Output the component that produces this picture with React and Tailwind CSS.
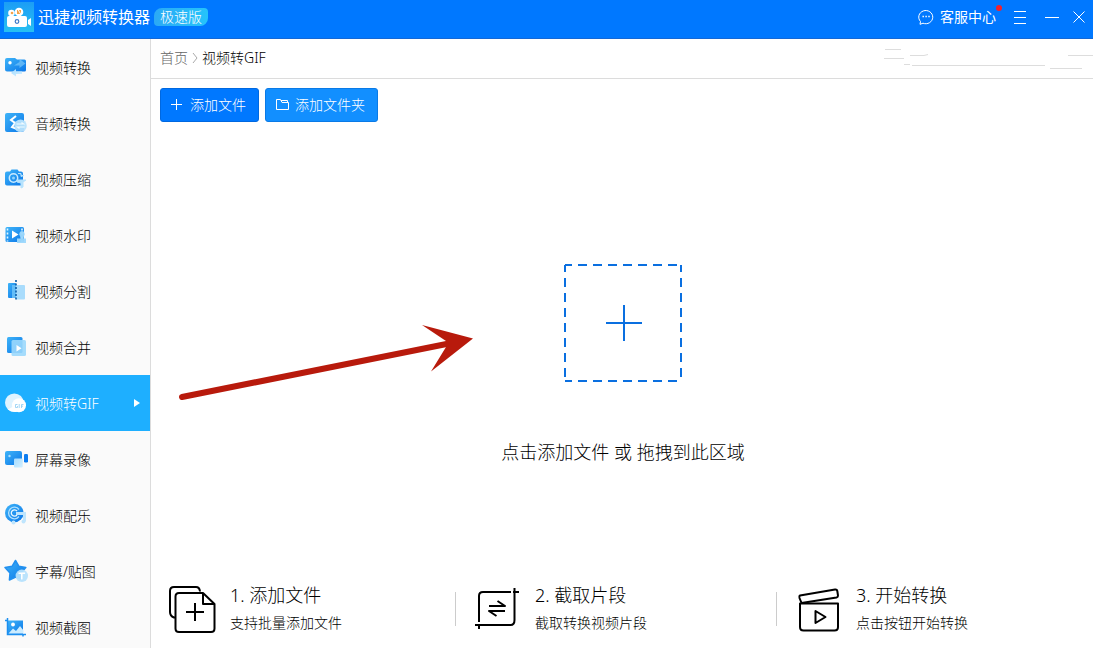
import React, { useState } from 'react';

// Shared gradients for the sidebar icons
const IconDefs = () => (
  <svg className="absolute w-0 h-0" aria-hidden="true">
    <defs>
      <linearGradient id="blue" x1="0" y1="0" x2="1" y2="1">
        <stop offset="0" stopColor="#3fb4f8" />
        <stop offset="1" stopColor="#0a76e8" />
      </linearGradient>
      <linearGradient id="light" x1="0" y1="0" x2="1" y2="1">
        <stop offset="0" stopColor="#a5dcff" />
        <stop offset="1" stopColor="#d3efff" />
      </linearGradient>
      <linearGradient id="logo" x1="0" y1="0" x2="0" y2="1">
        <stop offset="0" stopColor="#1c9df5" />
        <stop offset="1" stopColor="#27c0f2" />
      </linearGradient>
    </defs>
  </svg>
);

const icons = {
  convert: (
    <>
      <path d="M3 3h8l2 1.500h7.500q1.500 0 1.500 1.500v9q0 1.500-1.500 1.500H3q-2 0-2-2V5q0-2 2-2z" fill="url(#blue)" />
      <circle cx="6" cy="7.700" r="1.700" fill="#fff" />
      <path d="M10 10.500h5.500V13l6-4.500-6-4.500v3" fill="#7fcbfb" opacity=".65" />
      <path d="M18 16.500H12V14l-5 4 5 3.500v-2.500h6z" fill="url(#light)" />
    </>
  ),
  audio: (
    <>
      <rect x="1" y="2" width="19" height="19" rx="2" fill="url(#blue)" />
      <path d="M12 5l-5 4 4 3-3 4 5 2" fill="none" stroke="#fff" strokeWidth="2" />
      <circle cx="16.500" cy="14.800" r="6.300" fill="#b9e3fc" opacity=".95" />
      <path d="M12.500 13h7l-2-1.500M20.500 16h-7l2 1.500" fill="none" stroke="#f2fbff" strokeWidth="1.200" />
    </>
  ),
  compress: (
    <>
      <path d="M3 4.500h3l1.500-2h6l1.500 2h2q2 0 2 2v10q0 2-2 2H3q-2 0-2-2v-10q0-2 2-2z" fill="url(#blue)" />
      <circle cx="9.500" cy="11" r="4.200" fill="none" stroke="#c9eaff" strokeWidth="1.500" />
      <circle cx="9.500" cy="11" r="1.500" fill="#8fd3fb" />
      <path d="M14 6.500h3v3l3-1M12.500 13H22l-3 2v5l-2 1v-5l-4-1z" fill="#b5e2fd" stroke="#b5e2fd" />
    </>
  ),
  watermark: (
    <>
      <rect x="1.500" y="4" width="18.500" height="15" rx="1.500" fill="url(#blue)" />
      <path d="M3.500 5.500v13M18 5.500v13" stroke="#e2f5ff" strokeWidth="1.600" strokeDasharray="2 2" />
      <path d="M8 7.500l6.500 4-6.500 4z" fill="#fff" />
      <path d="M18 8a3 3 0 0 1 2 5l-.5 2.500H22V20h-9v-4.500h3.500L16 13a3 3 0 0 1 2-5z" fill="#9dd8fc" opacity=".95" />
    </>
  ),
  split: (
    <>
      <rect x="4" y="4" width="8" height="15" rx="1" fill="url(#blue)" />
      <rect x="12" y="6" width="9" height="14.500" rx="1" fill="#a9dcfc" />
      <rect x="8" y="6" width="4" height="13" fill="#63bdf7" />
      <path d="M12 1v20" stroke="#0b5da8" strokeWidth="1.600" strokeDasharray="2 1.500" />
    </>
  ),
  merge: (
    <>
      <rect x="3" y="2" width="15.500" height="16" rx="1.500" fill="url(#blue)" />
      <rect x="7.500" y="5" width="14.500" height="16" rx="1.500" fill="#9bd8fc" opacity=".9" />
      <path d="M12.500 10l5 3.200-5 3.200z" fill="#fff" />
    </>
  ),
  gif: (
    <>
      <circle cx="10.300" cy="11.700" r="9.300" fill="#dff3ff" />
      <path d="M4 18.500q3 3 9 2.500l-3-6z" fill="#fff" />
      <circle cx="15" cy="14.200" r="7" fill="#fff" />
      <path d="M13.500 13.500h-2v3h2v-1.500M15.200 13v4M17.500 17v-3.500h2M17.500 15.200h1.500" fill="none" stroke="#8ccbf2" strokeWidth=".8" />
    </>
  ),
  record: (
    <>
      <rect x="1" y="4" width="17" height="14" rx="2" fill="url(#blue)" />
      <circle cx="5.500" cy="9" r="1.200" fill="#a9e0ff" />
      <rect x="10" y="11.500" width="8.700" height="9" rx="1" fill="url(#light)" />
      <rect x="20" y="7" width="4" height="8.500" rx="1.200" fill="#0c7cf0" />
    </>
  ),
  music: (
    <>
      <circle cx="10.300" cy="10" r="9.300" fill="url(#blue)" />
      <path d="M15 6.500a5.800 5.800 0 1 0 0 7" fill="none" stroke="#aee0ff" strokeWidth="1.300" />
      <path d="M13 8a3.200 3.200 0 1 0 0 4" fill="none" stroke="#e8f7ff" strokeWidth="1.300" />
      <path d="M12 10.500h8.500v8" fill="none" stroke="#bfe5fd" strokeWidth="3" />
      <circle cx="9.500" cy="19.500" r="2" fill="#bfe5fd" />
      <circle cx="19.500" cy="18.500" r="2" fill="#bfe5fd" />
    </>
  ),
  sticker: (
    <>
      <path d="M11.500 1.500l3.300 5.700 7 1.300-4.600 5.300.8 6.800-6.300-2.600-6.300 3 .6-7L1 8.500l7.200-1.300z" fill="url(#blue)" stroke="#2290ef" strokeWidth="1.500" strokeLinejoin="round" />
      <circle cx="17.800" cy="16.800" r="6.200" fill="#b7e1fc" opacity=".95" />
      <path d="M14.500 14.200h6.600M17.800 14.200v6.300" stroke="#fff" strokeWidth="1.600" />
    </>
  ),
  capture: (
    <>
      <rect x="4" y="5.500" width="15" height="13.500" fill="url(#blue)" />
      <path d="M1 5.500h3M3.500 3v16.500H22M19 19v2.500" fill="none" stroke="#1c8ff0" strokeWidth="1.500" />
      <circle cx="9" cy="9.500" r="1.900" fill="#fff" />
      <path d="M4.500 18.500l4.500-5 3 2.500 4-5 3.500 4.500v3z" fill="#cbecff" />
    </>
  )
};

const menuItems = [
  { id: 'convert', label: '视频转换' },
  { id: 'audio', label: '音频转换' },
  { id: 'compress', label: '视频压缩' },
  { id: 'watermark', label: '视频水印' },
  { id: 'split', label: '视频分割' },
  { id: 'merge', label: '视频合并' },
  { id: 'gif', label: '视频转GIF' },
  { id: 'record', label: '屏幕录像' },
  { id: 'music', label: '视频配乐' },
  { id: 'sticker', label: '字幕/贴图' },
  { id: 'capture', label: '视频截图' }
];

const steps = [
  {
    title: '1. 添加文件',
    text: '支持批量添加文件',
    icon: (
      <>
        <path d="M7 32.500H6Q2 31 2 27V6q0-4 4-4h22q3.500 0 4 4.500" />
        <path d="M35 8H11q-3.500 0-3.500 3.500v32q0 3.500 3.500 3.500h32q3.500 0 3.500-3.500V19z" />
        <path d="M35 8v11h11M27 18v18M18 27h18" />
      </>
    )
  },
  {
    title: '2. 截取片段',
    text: '截取转换视频片段',
    icon: (
      <>
        <path d="M6 37V11q0-4 4-4h28M41.500 11v24q0 5-4 5H2M41.500 3v8M40 7h6M6 40v4" />
        <path d="M16 21h16l-7.500-5M32 26H16l7.500 5" />
      </>
    )
  },
  {
    title: '3. 开始转换',
    text: '点击按钮开始转换',
    icon: (
      <>
        <path d="M6 10.500L41 4.500q2-.3 2.300 1.500l.7 4.500q.2 1.500-1.500 2L7.500 18 5.500 13q-.5-2 .5-2.500z" />
        <path d="M6 18.500h38V42q0 3.500-3.500 3.500h-31Q6 45.500 6 42z" />
        <path d="M21.500 26v12l10-6z" />
      </>
    )
  }
];

const Header = () => (
  <header className="flex shrink-0 items-center justify-between h-[39px] bg-[#0078ff] border-b border-[#1468d6] text-white pl-1 pr-2 pb-1">
    <div className="flex items-center">
      <svg width="30" height="30" viewBox="0 0 30 30" aria-hidden="true">
        <rect width="30" height="30" fill="url(#logo)" />
        <circle cx="7.500" cy="11" r="3.300" fill="#fff" />
        <circle cx="15" cy="10" r="4.300" fill="#fff" />
        <circle cx="8" cy="11" r="1.300" fill="#f5a34a" />
        <path d="M13 8h4v4h-4z" fill="#f5a34a" />
        <path d="M14 7.500l3 5" stroke="#fff" />
        <rect x="3" y="14" width="20" height="11" rx="2" fill="#fff" />
        <path d="M24 18l3-2v8l-3-2z" fill="#fff" />
        <circle cx="13" cy="19.500" r="1.800" fill="none" stroke="#3c78c8" strokeWidth="1.200" />
      </svg>
      <h1 className="ml-1 text-base leading-6 font-normal">迅捷视频转换器</h1>
      <span className="ml-1 px-1.5 text-sm leading-[18px] rounded-tl-lg rounded-tr-sm rounded-br-lg rounded-bl-sm bg-linear-to-r from-[#2ba9f5] to-[#25c4fb]">极速版</span>
    </div>

    <div className="flex items-center">
      <button type="button" className="relative flex items-center gap-1.5 text-sm leading-5 font-normal">
        <svg width="16" height="16" viewBox="0 0 16 16" fill="none" stroke="currentColor" aria-hidden="true">
          <path d="M2.500 12.500A7 6.600 0 1 1 5 14.200L2 15.300z" />
          <path d="M4.500 7.500h1.400M7.400 7.500h1.400M10.300 7.500h1.400" strokeWidth="1.500" />
        </svg>
        客服中心
        <span className="absolute -top-0.5 -right-1.5 size-1.5 rounded-full bg-[#f5202c]" />
      </button>
      <button type="button" aria-label="菜单" className="ml-[17px]">
        <svg width="14" height="16" viewBox="0 0 14 16" stroke="currentColor" aria-hidden="true">
          <path d="M1 2.500h12M1 8.500h12M1 14.500h12" />
        </svg>
      </button>
      <button type="button" aria-label="最小化" className="ml-[17px]">
        <svg width="16" height="16" viewBox="0 0 16 16" stroke="currentColor" aria-hidden="true">
          <path d="M1 8.500h14" />
        </svg>
      </button>
      <button type="button" aria-label="关闭" className="ml-[13px]">
        <svg width="12" height="12" viewBox="0 0 12 12" stroke="currentColor" aria-hidden="true">
          <path d="M.5.5l11 11M11.500.5l-11 11" />
        </svg>
      </button>
    </div>
  </header>
);

const Sidebar = ({ active, onSelect }) => (
  <nav className="shrink-0 w-[151px] bg-[#fafafa] border-r border-[#dcdcdc] overflow-hidden">
    {menuItems.map((item) => (
      <button
        key={item.id}
        type="button"
        onClick={() => onSelect(item.id)}
        className={`flex items-center w-full h-14 pl-1 pr-2.5 gap-[7px] text-sm ${active === item.id ? 'bg-[#1eafff] text-white' : 'text-black'}`}
      >
        <svg width="24" height="24" viewBox="0 0 24 24" className="shrink-0" aria-hidden="true">{icons[item.id]}</svg>
        <span className="pt-0.5">{item.label}</span>
        {active === item.id && (
          <svg width="6" height="8" viewBox="0 0 6 8" className="ml-auto" aria-hidden="true">
            <path d="M0 0l6 4-6 4z" fill="#fff" />
          </svg>
        )}
      </button>
    ))}
  </nav>
);

const App = () => {
  const [active, setActive] = useState('gif');
  const current = menuItems.find((item) => item.id === active);

  return (
    <div className="flex flex-col h-screen overflow-hidden bg-white text-black font-light font-['Noto_Sans','Noto_Sans_CJK_SC',sans-serif]">
      <IconDefs />
      <Header />

      <div className="flex flex-1 min-h-0">
        <Sidebar active={active} onSelect={setActive} />

        <main className="flex flex-col flex-1 min-w-0">
          {/* Breadcrumb */}
          <div className="relative flex shrink-0 items-center h-10 pl-[9px] pb-0.5 border-b border-[#dcdcdc] text-sm">
            <a href="#" className="text-[#666666]">首页</a>
            <svg width="14" height="12" viewBox="0 0 14 12" fill="none" stroke="#aaaaaa" aria-hidden="true">
              <path d="M5 1l4 5-4 5" />
            </svg>
            <span>{current.label}</span>
            <svg width="210" height="40" viewBox="0 0 210 40" className="absolute top-0 right-0" fill="none" stroke="#dddddd" aria-hidden="true">
              <path d="M2 10.500h16M1 19.500h20M27 16.500h14l4-1M21 25.500h6M29 26.500h133M185 16.500h25M167 29.500h32" />
            </svg>
          </div>

          <div className="flex shrink-0 gap-1.5 px-[9px] pt-[9px] pb-[26px]">
            <button type="button" className="flex items-center h-[34px] pl-2.5 pr-3 gap-[7px] rounded-[3px] bg-[#0078ff] border border-[#0068e0] text-white text-sm">
              <svg width="12" height="12" viewBox="0 0 12 12" stroke="currentColor" aria-hidden="true">
                <path d="M5.500 0v11M0 5.500h11" />
              </svg>
              添加文件
            </button>
            <button type="button" className="flex items-center h-[34px] pl-2.5 pr-3 gap-1.5 rounded-[3px] bg-[#128fff] border border-[#0a7ae6] text-white text-sm">
              <svg width="13" height="12" viewBox="0 0 13 12" fill="none" stroke="currentColor" aria-hidden="true">
                <path d="M.5 10.500v-10h4l1.500 3h6.500v7zM5 1.500h6.500v2" />
              </svg>
              添加文件夹
            </button>
          </div>

          {/* Drop area */}
          <div className="flex flex-1 items-center justify-center pl-0.5">
            <div className="relative">
              <button type="button" className="flex flex-col items-center gap-14 text-lg leading-7">
                <svg width="118" height="118" viewBox="0 0 118 118" fill="none" stroke="#0a6fe0" strokeWidth="2" aria-hidden="true">
                  <path d="M1 1h116M117 1v116M1 117h116M1 1v116" strokeDasharray="9 6" strokeDashoffset="2" />
                  <path d="M60 41v36M42 59h36" />
                </svg>
                点击添加文件 或 拖拽到此区域
              </button>
              <svg width="296" height="80" viewBox="178 320 296 80" className="absolute right-full top-14 mr-7" fill="#b81a0c" aria-hidden="true">
                <path d="M183 397L450 343.500" stroke="#b81a0c" strokeWidth="6" strokeLinecap="round" />
                <path d="M423 325l51 13.500-42 33 15-24.500v-6z" />
              </svg>
            </div>
          </div>

          <div className="grid shrink-0 grid-cols-[305fr_321fr_316fr] pb-[11px]">
            {steps.map((step, i) => (
              <div key={step.title} className="flex items-center pl-[17px]">
                <svg width="48" height="48" viewBox="0 0 48 48" fill="none" stroke="#000" strokeWidth="2" strokeLinejoin="round" className="shrink-0" aria-hidden="true">{step.icon}</svg>
                <div className="ml-3.5 flex-1 whitespace-nowrap">
                  <h2 className="text-lg leading-7 font-light">{step.title}</h2>
                  <p className="text-sm leading-7">{step.text}</p>
                </div>
                {i < steps.length - 1 && <div className="w-px h-[34px] bg-[#cccccc]" />}
              </div>
            ))}
          </div>
        </main>
      </div>
    </div>
  );
};

export default App;
